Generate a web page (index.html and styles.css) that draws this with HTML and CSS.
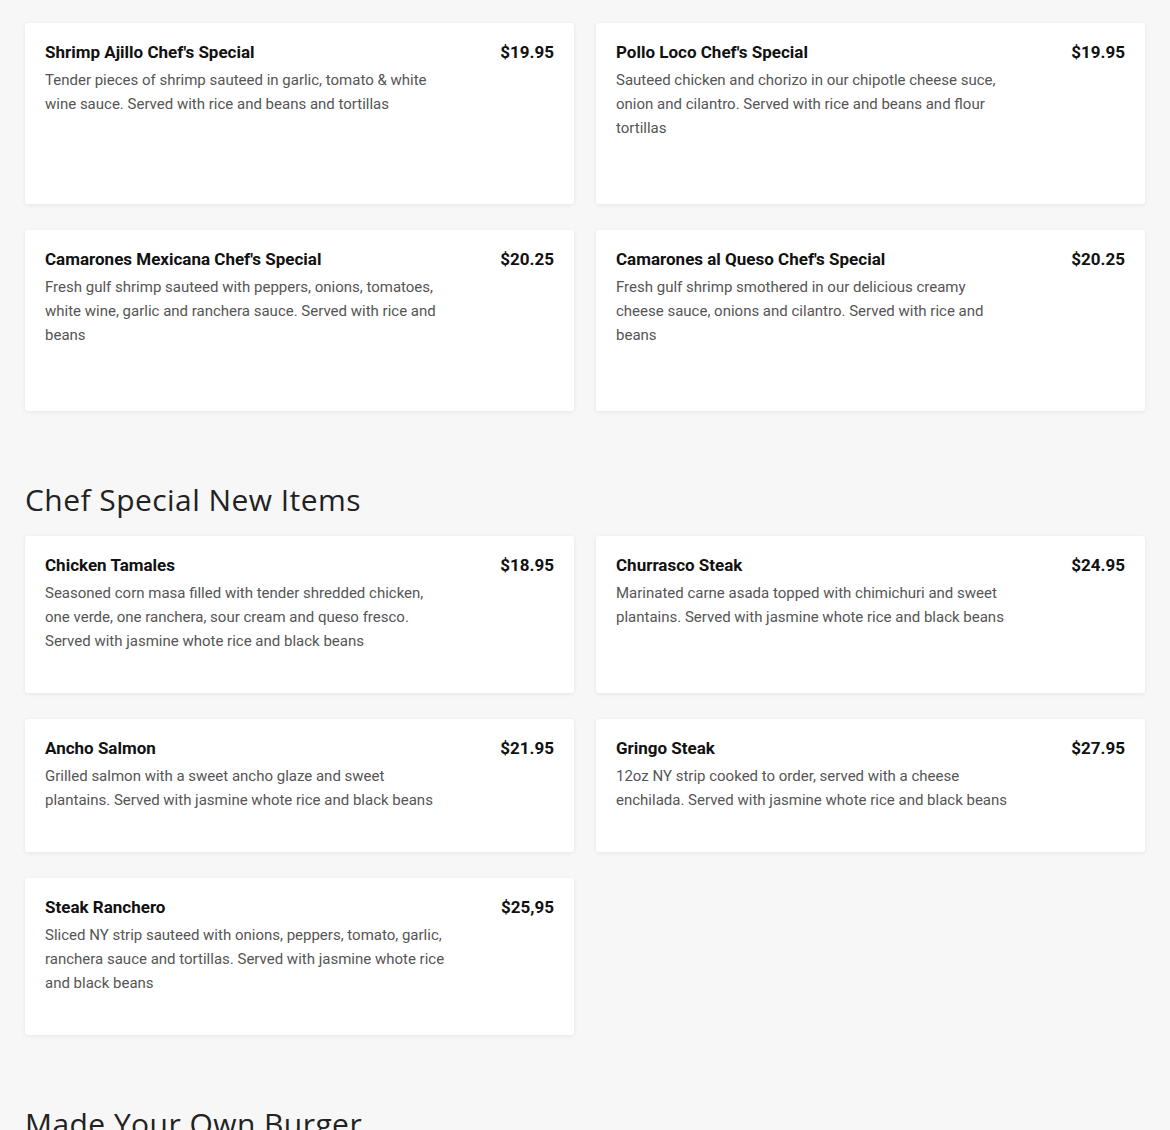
FILE: index.html
```html
<!DOCTYPE html>
<html lang="en">
<head>
    <meta charset="UTF-8">
    <title>Menu</title>
    <link rel="stylesheet" href="styles.css">
</head>

<body>

<div class="menu">

    <!-- Chef Specials -->
    <section class="menu-section">
        <div class="menu-grid tall">
            <div class="menu-item">
                <div class="item-head">
                    <h4>Shrimp Ajillo Chef's Special</h4>
                    <span class="price">$19.95</span>
                </div>
                <p>Tender pieces of shrimp sauteed in garlic, tomato &amp; white wine sauce. Served with rice and beans and tortillas</p>
            </div>
            <div class="menu-item">
                <div class="item-head">
                    <h4>Pollo Loco Chef's Special</h4>
                    <span class="price">$19.95</span>
                </div>
                <p>Sauteed chicken and chorizo in our chipotle cheese suce, onion and cilantro. Served with rice and beans and flour tortillas</p>
            </div>
            <div class="menu-item">
                <div class="item-head">
                    <h4>Camarones Mexicana Chef's Special</h4>
                    <span class="price">$20.25</span>
                </div>
                <p>Fresh gulf shrimp sauteed with peppers, onions, tomatoes, white wine, garlic and ranchera sauce. Served with rice and beans</p>
            </div>
            <div class="menu-item">
                <div class="item-head">
                    <h4>Camarones al Queso Chef's Special</h4>
                    <span class="price">$20.25</span>
                </div>
                <p>Fresh gulf shrimp smothered in our delicious creamy cheese sauce, onions and cilantro. Served with rice and beans</p>
            </div>
        </div>
    </section>

    <!-- New Items -->
    <section class="menu-section">
        <h2>Chef Special New Items</h2>
        <div class="menu-grid">
            <div class="menu-item">
                <div class="item-head">
                    <h4>Chicken Tamales</h4>
                    <span class="price">$18.95</span>
                </div>
                <p>Seasoned corn masa filled with tender shredded chicken, one verde, one ranchera, sour cream and queso fresco. Served with jasmine whote rice and black beans</p>
            </div>
            <div class="menu-item">
                <div class="item-head">
                    <h4>Churrasco Steak</h4>
                    <span class="price">$24.95</span>
                </div>
                <p>Marinated carne asada topped with chimichuri and sweet plantains. Served with jasmine whote rice and black beans</p>
            </div>
            <div class="menu-item">
                <div class="item-head">
                    <h4>Ancho Salmon</h4>
                    <span class="price">$21.95</span>
                </div>
                <p>Grilled salmon with a sweet ancho glaze and sweet plantains. Served with jasmine whote rice and black beans</p>
            </div>
            <div class="menu-item">
                <div class="item-head">
                    <h4>Gringo Steak</h4>
                    <span class="price">$27.95</span>
                </div>
                <p>12oz NY strip cooked to order, served with a cheese enchilada. Served with jasmine whote rice and black beans</p>
            </div>
            <div class="menu-item">
                <div class="item-head">
                    <h4>Steak Ranchero</h4>
                    <span class="price">$25,95</span>
                </div>
                <p>Sliced NY strip sauteed with onions, peppers, tomato, garlic, ranchera sauce and tortillas. Served with jasmine whote rice and black beans</p>
            </div>
        </div>
    </section>

    <!-- Burgers -->
    <section class="menu-section">
        <h2>Made Your Own Burger</h2>
    </section>

</div>

</body>
</html>
```

FILE: styles.css
```css
body {
    font-family: Roboto, "Liberation Sans", Arial, sans-serif;
    background: #f7f7f7;
    color: #333;
    margin: 0;
    padding: 0;
}
.menu {
    padding: 23px 25px 0;
}
.menu-section {
    margin-bottom: 71px;
}
.menu-section h2 {
    font-family: "Open Sans", "Liberation Sans", sans-serif;
    font-weight: 400;
    font-size: 30px;
    line-height: 36px;
    color: #222;
    margin: 0 0 18px;
    letter-spacing: 0.45px;
}
.menu-grid {
    display: grid;
    grid-template-columns: 1fr 1fr;
    gap: 26px 22px;
}
.menu-item {
    background: #fff;
    border-radius: 3px;
    box-shadow: 0 1px 4px rgba(0, 0, 0, 0.08);
    padding: 19px 20px 40px;
}
.tall .menu-item {
    padding-bottom: 64px;
}
.item-head {
    display: flex;
    justify-content: space-between;
    align-items: flex-start;
}
.item-head h4 {
    margin: 0;
    font-size: 17px;
    line-height: 20px;
    font-weight: 700;
    color: #111;
}
.price {
    font-size: 17px;
    line-height: 20px;
    font-weight: 700;
    color: #111;
}
.menu-item p {
    margin: 6px 0 0;
    max-width: 400px;
    font-size: 15px;
    line-height: 24px;
    color: #555;
}
```
